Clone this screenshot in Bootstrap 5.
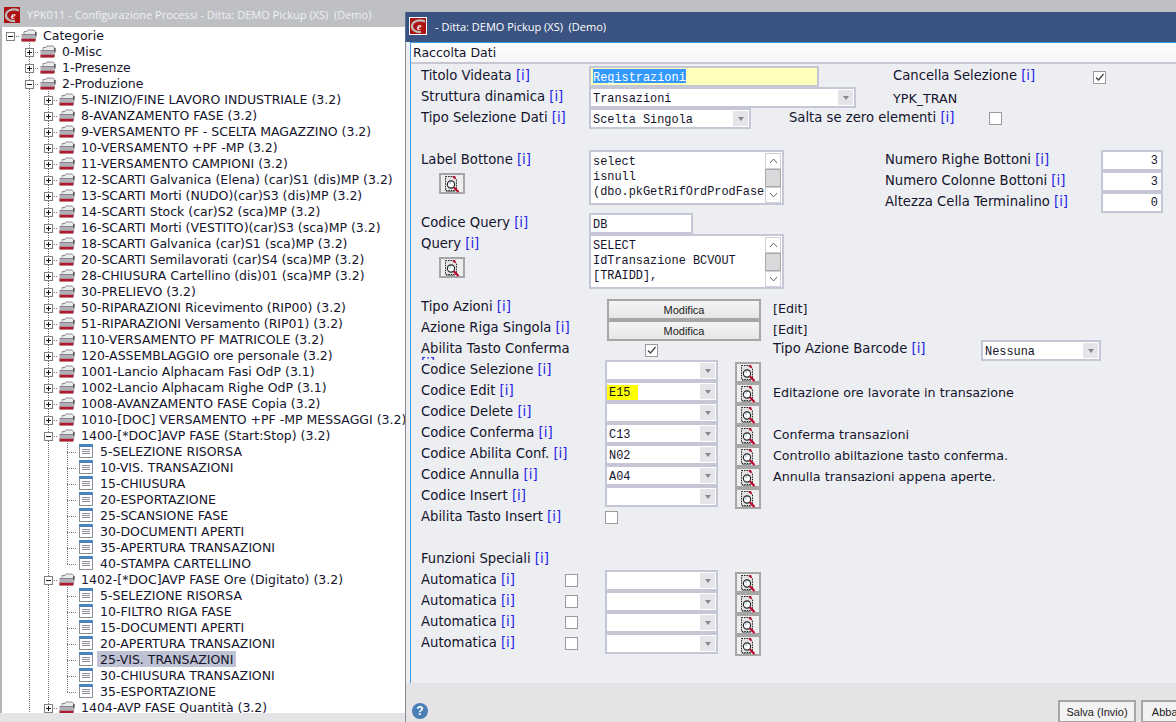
<!DOCTYPE html>
<html lang="it">
<head>
<meta charset="utf-8">
<title>YPK011 - Configurazione Processi</title>
<link href="https://cdn.jsdelivr.net/npm/bootstrap@5.3.0/dist/css/bootstrap.min.css" rel="stylesheet">
<style>
html,body{height:722px;overflow:hidden}
body{background:#bfc0c4;font-family:"DejaVu Sans",Verdana,sans-serif;font-size:12.5px;color:#14142c}
.desk{width:1176px;height:722px}
.lwin{width:405px;flex:none}
.ltitle{height:27px;padding-left:4px;padding-top:2px;gap:7px;font:11px "Open Sans",sans-serif;color:#eef0f4;white-space:pre}
.ltree{height:686px;background:#fff;border-left:2px solid #b4b5b9;overflow:hidden}
.lfoot{height:9px;background:#e4e4e7}
.tr{height:16px;line-height:18px;white-space:nowrap}
.cel{width:19px;height:16px;flex:none;position:relative;background-repeat:no-repeat}
.gv{background-image:repeating-linear-gradient(#777 0 1px,transparent 1px 2px);background-size:1px 100%;background-position:8px 0}
.cn{background-image:repeating-linear-gradient(#777 0 1px,transparent 1px 2px),repeating-linear-gradient(90deg,#777 0 1px,transparent 1px 2px);background-size:1px 100%,10px 1px;background-position:8px 0,8px 9px}
.ce{background-image:repeating-linear-gradient(#777 0 1px,transparent 1px 2px),repeating-linear-gradient(90deg,#777 0 1px,transparent 1px 2px);background-size:1px 10px,10px 1px;background-position:8px 0,8px 9px}
.ch{background-image:repeating-linear-gradient(90deg,#777 0 1px,transparent 1px 2px);background-size:10px 1px;background-position:8px 9px}
.box{position:absolute;left:4px;top:5px;width:9px;height:9px;background:#fff;border:1px solid #808080}
.box::before{content:"";position:absolute;left:1px;top:3px;width:5px;height:1px;background:#111}
.pl::after{content:"";position:absolute;left:3px;top:1px;width:1px;height:5px;background:#111}
.ic{width:19px;height:16px;flex:none}
.ic svg{display:block}
.fo{width:16px;height:13px;margin-top:2px}
.lf{width:14px;height:14px;margin:1px 0 0 1px}
.tx{padding:0 3px;height:16px}
.sel{background:#bfc2d2}

.rwin{width:771px;flex:none;margin-top:12px;height:710px;overflow:hidden}
.rtitle{height:30px;background:#3b5380;padding-left:3px;padding-bottom:2px;gap:10px;font:11px "Open Sans",sans-serif;color:#fff;white-space:pre;border-left:1px solid #5b6f96}
.rlogo{border:1px solid #fff;box-sizing:content-box;margin-right:-2px}
.rbody{height:641px;background:#edeef2;padding-left:4px;border-left:1px solid #8a8b90}
.rin{height:641px;border-left:1px solid #3d9be9;border-top:1px solid #3d9be9}
.rmenu{height:21px;background:linear-gradient(#fff,#f6f6f8);border-bottom:2px solid #c6c7d3;padding-left:2px;line-height:19px;font-size:12.5px}
.rfoot{height:39px;background:#e4e4e7;border-left:1px solid #8a8b90;padding-left:6px;padding-top:17px}
.fgrid{display:grid;height:619px;grid-template-rows:repeat(28,21px);
grid-template-columns:[a] 18px [b] 126px [au] 24px [c] 16px [d] 2px [mo] 38px [ck] 90px [e] 38px [f] 16px [g] 96px [h] 8px [i] 88px [j] 8px [k] 104px [l] 8px [m] 62px;
margin-left:10px;align-items:start;justify-items:start}
.ca{grid-column-start:a}.cb{grid-column-start:b}.cau{grid-column-start:au}.cc{grid-column-start:c}.cd{grid-column-start:d}.cmo{grid-column-start:mo}.cck{grid-column-start:ck}.ce2{grid-column-start:e}.cf{grid-column-start:f}.cg{grid-column-start:g}.ch2{grid-column-start:h}.ci{grid-column-start:i}.cj{grid-column-start:j}.ck2{grid-column-start:k}.cl2{grid-column-start:l}.cm{grid-column-start:m}
.r1{grid-row-start:1}.r2{grid-row-start:2}.r3{grid-row-start:3}.r5{grid-row-start:5}.r6{grid-row-start:6}.r7{grid-row-start:7}.r8{grid-row-start:8}.r9{grid-row-start:9}.r10{grid-row-start:10}.r12{grid-row-start:12}.r13{grid-row-start:13}.r14{grid-row-start:14}.r15{grid-row-start:15}.r16{grid-row-start:16}.r17{grid-row-start:17}.r18{grid-row-start:18}.r19{grid-row-start:19}.r20{grid-row-start:20}.r21{grid-row-start:21}.r22{grid-row-start:22}.r24{grid-row-start:24}.r25{grid-row-start:25}.r26{grid-row-start:26}.r27{grid-row-start:27}.r28{grid-row-start:28}
.fl{width:165px;height:23px;line-height:15px;padding-top:4px;overflow:hidden;font-size:13.2px}
.fr{line-height:15px;padding-top:4px;white-space:nowrap;font-size:13.2px}
.fd{line-height:16px;padding-top:6px;white-space:nowrap;font-size:12.7px}
.inf{color:#2020e8}
.wf.form-control{border:2px solid #c6c7d6;border-radius:0;padding:2px 0 0 2px;margin-top:2px;height:21px;min-height:0;font:11.9px/17px "Liberation Mono",monospace;color:#14142c;background:#fff;white-space:nowrap;overflow:hidden}
.wyel.form-control{background:#ffffb9;width:230px}
.hilite{background:#3399ff;color:#fff;display:inline-block;height:14px;line-height:19px;margin-top:-1px;vertical-align:top}
.wq{width:104px}
.wnum.form-control{width:62px;text-align:right;padding:1px 3px 0 0}
.wc{border:2px solid #c6c7d6;background:#fff;margin-top:2px;height:21px;font:11.9px/17px "Liberation Mono",monospace;padding-left:1px;overflow:hidden}
.wc.mt3{margin-top:3px}
.wc .vl{flex:1 1 auto;padding:2px 0 0 1px;white-space:nowrap;display:block}
.wc .arw{width:15px;flex:none;margin:1px 1px 1px 0;background:#e5e5e9;display:flex;align-items:center;justify-content:center}
.wc .arw::before{content:"";border:3.5px solid transparent;border-top:4px solid #888;border-bottom:0}
.w113{width:113px}.w267{width:267px}.w162{width:162px}.w120{width:120px}
.wc .vl .yelv{background:#ffff00;display:block;width:31px;height:16px;margin:0 0 0 -2px;padding-left:2px;line-height:16px}
.wm{border:2px solid #c6c7d6;background:#fff;margin-top:2px;width:195px;height:55px;overflow:hidden}
.wm .mt{flex:1 1 auto;font:11.9px/15px "Liberation Mono",monospace;padding:3px 0 0 2px;white-space:nowrap;overflow:hidden}
.wm .sb{width:16px;flex:none;margin:1px 1px 1px 0;border:0}
.sba{height:16px;background:#fff;border:1px solid #d0d0d6;display:flex;align-items:center;justify-content:center}
.sbt{height:18px;background:#d9d9dc;border:1px solid #a8a8ac}
.wb{padding:0;margin-top:4px;width:26px;height:21px;border:2px solid #a6a6a6;border-radius:0;background:#eeeeef;line-height:0;display:flex;align-items:center;justify-content:center}
.wmod{margin-top:4px;width:154px;height:21px;padding:1px 0 0;border:2px solid #a6a6a6;border-radius:0;background:linear-gradient(#f4f4f4,#e6e6e6);font:11px/17px "Liberation Sans",sans-serif;color:#222}
.wk.form-check-input{margin-top:6px;width:13px;height:13px;border:1px solid #9a9a9a;border-radius:0;background-color:#fff;float:none}
.wk.form-check-input:checked{background-color:#fff;border-color:#9a9a9a;background-image:url("data:image/svg+xml,%3Csvg xmlns='http://www.w3.org/2000/svg' viewBox='0 0 13 13'%3E%3Cpath d='M3 6.5l2.5 2.5 5-6' fill='none' stroke='%23444' stroke-width='1.3'/%3E%3C/svg%3E");background-size:13px 13px}
.mk7.form-check-input{margin-top:7px}
.wact{width:78px;height:22px;padding:0;border:2px solid #a6a6a6;border-bottom-width:1px;border-radius:0;background:#f2f2f3;font:11px/18px "Liberation Sans",sans-serif;color:#222;flex:none}
.helpi{width:16px;height:16px;flex:none;margin-top:3px;border-radius:50%;background:#4a7fb5;color:#fff;font:bold 12px/16px "Liberation Sans",sans-serif;text-align:center}
.acts{margin-left:630px;gap:5px}
</style>
</head>
<body>
<svg width="0" height="0" class="position-absolute">
<symbol id="fold" viewBox="0 0 16 13">
<path d="M3 4.5V2.5h3l1-1.5h6l1.500 1.500V6H3z" fill="#ececee" stroke="#66666c" stroke-width=".7"/>
<path d="M.5 5.5h14l1 2-1 5H.5z" fill="#b0b0b6"/>
<path d="M.5 5.500h14" stroke="#85858a" stroke-width="1"/>
<path d="M15 3v4" stroke="#222" stroke-width="1"/>
<path d="M.5 9.800h14.200l-.5 2.700H.5z" fill="#ab1c2c"/>
</symbol>
<symbol id="leaf" viewBox="0 0 14 14">
<rect x=".5" y=".5" width="13" height="13" fill="#fff" stroke="#8b8f99"/>
<rect x="0" y="0" width="14" height="3" fill="#4b82bd"/>
<path d="M3 5.500h8M3 7.500h8M3 9.500h8" stroke="#8b8f99"/>
</symbol>
<symbol id="lens" viewBox="0 0 18 18">
<path d="M2.500 1.500h8l3 3v11h-11z" fill="#e2e2e2" stroke="#222" stroke-dasharray="1.500 1"/>
<path d="M9.500 1h2.500l1.500 3.500-3.500-1.500z" fill="#b01030"/>
<circle cx="8" cy="9.500" r="3.600" fill="#fff" stroke="#222" stroke-width="1.100"/>
<path d="M6.200 8.200h1.800" stroke="#9bc" stroke-width="1.200"/>
<path d="M10.800 12.300l4.700 4.700" stroke="#c00028" stroke-width="2"/>
<path d="M3 16.500h9" stroke="#888"/>
</symbol>
<symbol id="logo" viewBox="0 0 16 16">
<rect width="16" height="16" fill="#ad1212"/>
<path d="M15 3.500C9 1 2.500 3 2 8c-.4 4 4 6.500 9 6" fill="none" stroke="#bbb" stroke-width="2.200"/>
<ellipse cx="10.500" cy="8" rx="4.500" ry="4" fill="#ad1212"/>
<text x="7" y="11.500" font-family="Liberation Serif" font-style="italic" font-weight="700" font-size="10" fill="#fff">e</text>
</symbol>
</svg>

<div class="desk d-flex">
 <section class="lwin">
  <div class="ltitle d-flex align-items-center"><svg width="16" height="16"><use href="#logo"/></svg><span>YPK011 - Configurazione Processi - Ditta: DEMO Pickup (XS)  (Demo)</span></div>
  <div class="ltree">
   <div class="tr d-flex"><span class="cel ch"><i class="box"></i></span><span class="ic"><svg class="fo"><use href="#fold"/></svg></span><span class="tx">Categorie</span></div>
   <div class="tr d-flex"><span class="cel"></span><span class="cel cn"><i class="box pl"></i></span><span class="ic"><svg class="fo"><use href="#fold"/></svg></span><span class="tx">0-Misc</span></div>
   <div class="tr d-flex"><span class="cel"></span><span class="cel cn"><i class="box pl"></i></span><span class="ic"><svg class="fo"><use href="#fold"/></svg></span><span class="tx">1-Presenze</span></div>
   <div class="tr d-flex"><span class="cel"></span><span class="cel cn"><i class="box"></i></span><span class="ic"><svg class="fo"><use href="#fold"/></svg></span><span class="tx">2-Produzione</span></div>
   <div class="tr d-flex"><span class="cel"></span><span class="cel gv"></span><span class="cel cn"><i class="box pl"></i></span><span class="ic"><svg class="fo"><use href="#fold"/></svg></span><span class="tx">5-INIZIO/FINE LAVORO INDUSTRIALE (3.2)</span></div>
   <div class="tr d-flex"><span class="cel"></span><span class="cel gv"></span><span class="cel cn"><i class="box pl"></i></span><span class="ic"><svg class="fo"><use href="#fold"/></svg></span><span class="tx">8-AVANZAMENTO FASE (3.2)</span></div>
   <div class="tr d-flex"><span class="cel"></span><span class="cel gv"></span><span class="cel cn"><i class="box pl"></i></span><span class="ic"><svg class="fo"><use href="#fold"/></svg></span><span class="tx">9-VERSAMENTO PF - SCELTA MAGAZZINO (3.2)</span></div>
   <div class="tr d-flex"><span class="cel"></span><span class="cel gv"></span><span class="cel cn"><i class="box pl"></i></span><span class="ic"><svg class="fo"><use href="#fold"/></svg></span><span class="tx">10-VERSAMENTO +PF -MP (3.2)</span></div>
   <div class="tr d-flex"><span class="cel"></span><span class="cel gv"></span><span class="cel cn"><i class="box pl"></i></span><span class="ic"><svg class="fo"><use href="#fold"/></svg></span><span class="tx">11-VERSAMENTO CAMPIONI (3.2)</span></div>
   <div class="tr d-flex"><span class="cel"></span><span class="cel gv"></span><span class="cel cn"><i class="box pl"></i></span><span class="ic"><svg class="fo"><use href="#fold"/></svg></span><span class="tx">12-SCARTI Galvanica (Elena) (car)S1 (dis)MP (3.2)</span></div>
   <div class="tr d-flex"><span class="cel"></span><span class="cel gv"></span><span class="cel cn"><i class="box pl"></i></span><span class="ic"><svg class="fo"><use href="#fold"/></svg></span><span class="tx">13-SCARTI Morti (NUDO)(car)S3 (dis)MP (3.2)</span></div>
   <div class="tr d-flex"><span class="cel"></span><span class="cel gv"></span><span class="cel cn"><i class="box pl"></i></span><span class="ic"><svg class="fo"><use href="#fold"/></svg></span><span class="tx">14-SCARTI Stock (car)S2 (sca)MP (3.2)</span></div>
   <div class="tr d-flex"><span class="cel"></span><span class="cel gv"></span><span class="cel cn"><i class="box pl"></i></span><span class="ic"><svg class="fo"><use href="#fold"/></svg></span><span class="tx">16-SCARTI Morti (VESTITO)(car)S3 (sca)MP (3.2)</span></div>
   <div class="tr d-flex"><span class="cel"></span><span class="cel gv"></span><span class="cel cn"><i class="box pl"></i></span><span class="ic"><svg class="fo"><use href="#fold"/></svg></span><span class="tx">18-SCARTI Galvanica (car)S1 (sca)MP (3.2)</span></div>
   <div class="tr d-flex"><span class="cel"></span><span class="cel gv"></span><span class="cel cn"><i class="box pl"></i></span><span class="ic"><svg class="fo"><use href="#fold"/></svg></span><span class="tx">20-SCARTI Semilavorati (car)S4 (sca)MP (3.2)</span></div>
   <div class="tr d-flex"><span class="cel"></span><span class="cel gv"></span><span class="cel cn"><i class="box pl"></i></span><span class="ic"><svg class="fo"><use href="#fold"/></svg></span><span class="tx">28-CHIUSURA Cartellino (dis)01 (sca)MP (3.2)</span></div>
   <div class="tr d-flex"><span class="cel"></span><span class="cel gv"></span><span class="cel cn"><i class="box pl"></i></span><span class="ic"><svg class="fo"><use href="#fold"/></svg></span><span class="tx">30-PRELIEVO (3.2)</span></div>
   <div class="tr d-flex"><span class="cel"></span><span class="cel gv"></span><span class="cel cn"><i class="box pl"></i></span><span class="ic"><svg class="fo"><use href="#fold"/></svg></span><span class="tx">50-RIPARAZIONI Ricevimento (RIP00) (3.2)</span></div>
   <div class="tr d-flex"><span class="cel"></span><span class="cel gv"></span><span class="cel cn"><i class="box pl"></i></span><span class="ic"><svg class="fo"><use href="#fold"/></svg></span><span class="tx">51-RIPARAZIONI Versamento (RIP01) (3.2)</span></div>
   <div class="tr d-flex"><span class="cel"></span><span class="cel gv"></span><span class="cel cn"><i class="box pl"></i></span><span class="ic"><svg class="fo"><use href="#fold"/></svg></span><span class="tx">110-VERSAMENTO PF MATRICOLE (3.2)</span></div>
   <div class="tr d-flex"><span class="cel"></span><span class="cel gv"></span><span class="cel cn"><i class="box pl"></i></span><span class="ic"><svg class="fo"><use href="#fold"/></svg></span><span class="tx">120-ASSEMBLAGGIO ore personale (3.2)</span></div>
   <div class="tr d-flex"><span class="cel"></span><span class="cel gv"></span><span class="cel cn"><i class="box pl"></i></span><span class="ic"><svg class="fo"><use href="#fold"/></svg></span><span class="tx">1001-Lancio Alphacam Fasi OdP (3.1)</span></div>
   <div class="tr d-flex"><span class="cel"></span><span class="cel gv"></span><span class="cel cn"><i class="box pl"></i></span><span class="ic"><svg class="fo"><use href="#fold"/></svg></span><span class="tx">1002-Lancio Alphacam Righe OdP (3.1)</span></div>
   <div class="tr d-flex"><span class="cel"></span><span class="cel gv"></span><span class="cel cn"><i class="box pl"></i></span><span class="ic"><svg class="fo"><use href="#fold"/></svg></span><span class="tx">1008-AVANZAMENTO FASE Copia (3.2)</span></div>
   <div class="tr d-flex"><span class="cel"></span><span class="cel gv"></span><span class="cel cn"><i class="box pl"></i></span><span class="ic"><svg class="fo"><use href="#fold"/></svg></span><span class="tx">1010-[DOC] VERSAMENTO +PF -MP MESSAGGI (3.2)</span></div>
   <div class="tr d-flex"><span class="cel"></span><span class="cel gv"></span><span class="cel cn"><i class="box"></i></span><span class="ic"><svg class="fo"><use href="#fold"/></svg></span><span class="tx">1400-[*DOC]AVP FASE (Start:Stop) (3.2)</span></div>
   <div class="tr d-flex"><span class="cel"></span><span class="cel gv"></span><span class="cel gv"></span><span class="cel cn"></span><span class="ic"><svg class="lf"><use href="#leaf"/></svg></span><span class="tx">5-SELEZIONE RISORSA</span></div>
   <div class="tr d-flex"><span class="cel"></span><span class="cel gv"></span><span class="cel gv"></span><span class="cel cn"></span><span class="ic"><svg class="lf"><use href="#leaf"/></svg></span><span class="tx">10-VIS. TRANSAZIONI</span></div>
   <div class="tr d-flex"><span class="cel"></span><span class="cel gv"></span><span class="cel gv"></span><span class="cel cn"></span><span class="ic"><svg class="lf"><use href="#leaf"/></svg></span><span class="tx">15-CHIUSURA</span></div>
   <div class="tr d-flex"><span class="cel"></span><span class="cel gv"></span><span class="cel gv"></span><span class="cel cn"></span><span class="ic"><svg class="lf"><use href="#leaf"/></svg></span><span class="tx">20-ESPORTAZIONE</span></div>
   <div class="tr d-flex"><span class="cel"></span><span class="cel gv"></span><span class="cel gv"></span><span class="cel cn"></span><span class="ic"><svg class="lf"><use href="#leaf"/></svg></span><span class="tx">25-SCANSIONE FASE</span></div>
   <div class="tr d-flex"><span class="cel"></span><span class="cel gv"></span><span class="cel gv"></span><span class="cel cn"></span><span class="ic"><svg class="lf"><use href="#leaf"/></svg></span><span class="tx">30-DOCUMENTI APERTI</span></div>
   <div class="tr d-flex"><span class="cel"></span><span class="cel gv"></span><span class="cel gv"></span><span class="cel cn"></span><span class="ic"><svg class="lf"><use href="#leaf"/></svg></span><span class="tx">35-APERTURA TRANSAZIONI</span></div>
   <div class="tr d-flex"><span class="cel"></span><span class="cel gv"></span><span class="cel gv"></span><span class="cel ce"></span><span class="ic"><svg class="lf"><use href="#leaf"/></svg></span><span class="tx">40-STAMPA CARTELLINO</span></div>
   <div class="tr d-flex"><span class="cel"></span><span class="cel gv"></span><span class="cel cn"><i class="box"></i></span><span class="ic"><svg class="fo"><use href="#fold"/></svg></span><span class="tx">1402-[*DOC]AVP FASE Ore (Digitato) (3.2)</span></div>
   <div class="tr d-flex"><span class="cel"></span><span class="cel gv"></span><span class="cel gv"></span><span class="cel cn"></span><span class="ic"><svg class="lf"><use href="#leaf"/></svg></span><span class="tx">5-SELEZIONE RISORSA</span></div>
   <div class="tr d-flex"><span class="cel"></span><span class="cel gv"></span><span class="cel gv"></span><span class="cel cn"></span><span class="ic"><svg class="lf"><use href="#leaf"/></svg></span><span class="tx">10-FILTRO RIGA FASE</span></div>
   <div class="tr d-flex"><span class="cel"></span><span class="cel gv"></span><span class="cel gv"></span><span class="cel cn"></span><span class="ic"><svg class="lf"><use href="#leaf"/></svg></span><span class="tx">15-DOCUMENTI APERTI</span></div>
   <div class="tr d-flex"><span class="cel"></span><span class="cel gv"></span><span class="cel gv"></span><span class="cel cn"></span><span class="ic"><svg class="lf"><use href="#leaf"/></svg></span><span class="tx">20-APERTURA TRANSAZIONI</span></div>
   <div class="tr d-flex"><span class="cel"></span><span class="cel gv"></span><span class="cel gv"></span><span class="cel cn"></span><span class="ic"><svg class="lf"><use href="#leaf"/></svg></span><span class="tx sel">25-VIS. TRANSAZIONI</span></div>
   <div class="tr d-flex"><span class="cel"></span><span class="cel gv"></span><span class="cel gv"></span><span class="cel cn"></span><span class="ic"><svg class="lf"><use href="#leaf"/></svg></span><span class="tx">30-CHIUSURA TRANSAZIONI</span></div>
   <div class="tr d-flex"><span class="cel"></span><span class="cel gv"></span><span class="cel gv"></span><span class="cel ce"></span><span class="ic"><svg class="lf"><use href="#leaf"/></svg></span><span class="tx">35-ESPORTAZIONE</span></div>
   <div class="tr d-flex"><span class="cel"></span><span class="cel gv"></span><span class="cel cn"><i class="box pl"></i></span><span class="ic"><svg class="fo"><use href="#fold"/></svg></span><span class="tx">1404-AVP FASE Quantità (3.2)</span></div>
  </div>
  <div class="lfoot"></div>
 </section>

 <section class="rwin">
  <div class="rtitle d-flex align-items-center"><svg class="rlogo" width="16" height="16"><use href="#logo"/></svg><span>- Ditta: DEMO Pickup (XS)  (Demo)</span></div>
  <div class="rbody"><div class="rin">
   <div class="rmenu">Raccolta Dati</div>
   <form class="fgrid">
    <div class="fl ca r1">Titolo Videata <span class="inf">[i]</span></div>
    <div class="form-control wf wyel cc r1"><span class="hilite">Registrazioni</span></div>
    <div class="fr ci r1">Cancella Selezione <span class="inf">[i]</span></div>
    <input type="checkbox" class="form-check-input wk mk7 cl2 r1" checked aria-label="Cancella Selezione">

    <div class="fl ca r2">Struttura dinamica <span class="inf">[i]</span></div>
    <div class="wc w267 d-flex cc r2"><span class="vl">Transazioni</span><span class="arw"></span></div>
    <div class="fd ci r2">YPK_TRAN</div>

    <div class="fl ca r3">Tipo Selezione Dati <span class="inf">[i]</span></div>
    <div class="wc w162 d-flex cc r3"><span class="vl">Scelta Singola</span><span class="arw"></span></div>
    <div class="fr cg r3">Salta se zero elementi <span class="inf">[i]</span></div>
    <input type="checkbox" class="form-check-input wk ck2 r3" aria-label="Salta se zero elementi">

    <div class="fl ca r5">Label Bottone <span class="inf">[i]</span></div>
    <div class="wm d-flex cc r5"><div class="mt">select<br>isnull<br>(dbo.pkGetRifOrdProdFase</div><div class="sb"><div class="sba"><svg width="9" height="6"><path d="M1 5l3.500-4 3.500 4" fill="none" stroke="#666"/></svg></div><div class="sbt"></div><div class="sba"><svg width="9" height="6"><path d="M1 1l3.500 4 3.500-4" fill="none" stroke="#666"/></svg></div></div></div>
    <div class="fr ch2 r5">Numero Righe Bottoni <span class="inf">[i]</span></div>
    <div class="form-control wf wnum cm r5">3</div>
    <button type="button" class="btn wb cb r6"><svg width="18" height="18"><use href="#lens"/></svg></button>
    <div class="fr ch2 r6">Numero Colonne Bottoni <span class="inf">[i]</span></div>
    <div class="form-control wf wnum cm r6">3</div>
    <div class="fr ch2 r7">Altezza Cella Terminalino <span class="inf">[i]</span></div>
    <div class="form-control wf wnum cm r7">0</div>

    <div class="fl ca r8">Codice Query <span class="inf">[i]</span></div>
    <div class="form-control wf wq cc r8">DB</div>
    <div class="fl ca r9">Query <span class="inf">[i]</span></div>
    <div class="wm d-flex cc r9"><div class="mt">SELECT<br>IdTransazione BCVOUT<br>[TRAIDD],</div><div class="sb"><div class="sba"><svg width="9" height="6"><path d="M1 5l3.500-4 3.500 4" fill="none" stroke="#666"/></svg></div><div class="sbt"></div><div class="sba"><svg width="9" height="6"><path d="M1 1l3.500 4 3.500-4" fill="none" stroke="#666"/></svg></div></div></div>
    <button type="button" class="btn wb cb r10"><svg width="18" height="18"><use href="#lens"/></svg></button>

    <div class="fl ca r12">Tipo Azioni <span class="inf">[i]</span></div>
    <button type="button" class="btn wmod cmo r12">Modifica</button>
    <div class="fd cf r12">[Edit]</div>
    <div class="fl ca r13">Azione Riga Singola <span class="inf">[i]</span></div>
    <button type="button" class="btn wmod cmo r13">Modifica</button>
    <div class="fd cf r13">[Edit]</div>
    <div class="fl ca r14">Abilita Tasto Conferma <span class="inf">[i]</span></div>
    <input type="checkbox" class="form-check-input wk mk7 cck r14" checked aria-label="Abilita Tasto Conferma">
    <div class="fr cf r14">Tipo Azione Barcode <span class="inf">[i]</span></div>
    <div class="wc mt3 w120 d-flex cj r14"><span class="vl">Nessuna</span><span class="arw"></span></div>

    <div class="fl ca r15">Codice Selezione <span class="inf">[i]</span></div>
    <div class="wc w113 d-flex cd r15"><span class="vl"></span><span class="arw"></span></div>
    <button type="button" class="btn wb ce2 r15"><svg width="18" height="18"><use href="#lens"/></svg></button>

    <div class="fl ca r16">Codice Edit <span class="inf">[i]</span></div>
    <div class="wc w113 d-flex cd r16"><span class="vl"><span class="yelv">E15</span></span><span class="arw"></span></div>
    <button type="button" class="btn wb ce2 r16"><svg width="18" height="18"><use href="#lens"/></svg></button>
    <div class="fd cf r16">Editazione ore lavorate in transazione</div>

    <div class="fl ca r17">Codice Delete <span class="inf">[i]</span></div>
    <div class="wc w113 d-flex cd r17"><span class="vl"></span><span class="arw"></span></div>
    <button type="button" class="btn wb ce2 r17"><svg width="18" height="18"><use href="#lens"/></svg></button>

    <div class="fl ca r18">Codice Conferma <span class="inf">[i]</span></div>
    <div class="wc w113 d-flex cd r18"><span class="vl">C13</span><span class="arw"></span></div>
    <button type="button" class="btn wb ce2 r18"><svg width="18" height="18"><use href="#lens"/></svg></button>
    <div class="fd cf r18">Conferma transazioni</div>

    <div class="fl ca r19">Codice Abilita Conf. <span class="inf">[i]</span></div>
    <div class="wc w113 d-flex cd r19"><span class="vl">N02</span><span class="arw"></span></div>
    <button type="button" class="btn wb ce2 r19"><svg width="18" height="18"><use href="#lens"/></svg></button>
    <div class="fd cf r19">Controllo abiltazione tasto conferma.</div>

    <div class="fl ca r20">Codice Annulla <span class="inf">[i]</span></div>
    <div class="wc w113 d-flex cd r20"><span class="vl">A04</span><span class="arw"></span></div>
    <button type="button" class="btn wb ce2 r20"><svg width="18" height="18"><use href="#lens"/></svg></button>
    <div class="fd cf r20">Annulla transazioni appena aperte.</div>

    <div class="fl ca r21">Codice Insert <span class="inf">[i]</span></div>
    <div class="wc w113 d-flex cd r21"><span class="vl"></span><span class="arw"></span></div>
    <button type="button" class="btn wb ce2 r21"><svg width="18" height="18"><use href="#lens"/></svg></button>

    <div class="fl ca r22">Abilita Tasto Insert <span class="inf">[i]</span></div>
    <input type="checkbox" class="form-check-input wk cd r22" aria-label="Abilita Tasto Insert">

    <div class="fl ca r24">Funzioni Speciali <span class="inf">[i]</span></div>

    <div class="fl ca r25">Automatica <span class="inf">[i]</span></div>
    <input type="checkbox" class="form-check-input wk cau r25" aria-label="Automatica">
    <div class="wc w113 d-flex cd r25"><span class="vl"></span><span class="arw"></span></div>
    <button type="button" class="btn wb ce2 r25"><svg width="18" height="18"><use href="#lens"/></svg></button>

    <div class="fl ca r26">Automatica <span class="inf">[i]</span></div>
    <input type="checkbox" class="form-check-input wk cau r26" aria-label="Automatica">
    <div class="wc w113 d-flex cd r26"><span class="vl"></span><span class="arw"></span></div>
    <button type="button" class="btn wb ce2 r26"><svg width="18" height="18"><use href="#lens"/></svg></button>

    <div class="fl ca r27">Automatica <span class="inf">[i]</span></div>
    <input type="checkbox" class="form-check-input wk cau r27" aria-label="Automatica">
    <div class="wc w113 d-flex cd r27"><span class="vl"></span><span class="arw"></span></div>
    <button type="button" class="btn wb ce2 r27"><svg width="18" height="18"><use href="#lens"/></svg></button>

    <div class="fl ca r28">Automatica <span class="inf">[i]</span></div>
    <input type="checkbox" class="form-check-input wk cau r28" aria-label="Automatica">
    <div class="wc w113 d-flex cd r28"><span class="vl"></span><span class="arw"></span></div>
    <button type="button" class="btn wb ce2 r28"><svg width="18" height="18"><use href="#lens"/></svg></button>
   </form>
  </div></div>
  <div class="rfoot d-flex">
   <div class="helpi">?</div>
   <div class="d-flex flex-nowrap acts">
    <button type="button" class="btn wact">Salva (Invio)</button>
    <button type="button" class="btn wact">Abbandona</button>
   </div>
  </div>
 </section>
</div>
</body>
</html>
